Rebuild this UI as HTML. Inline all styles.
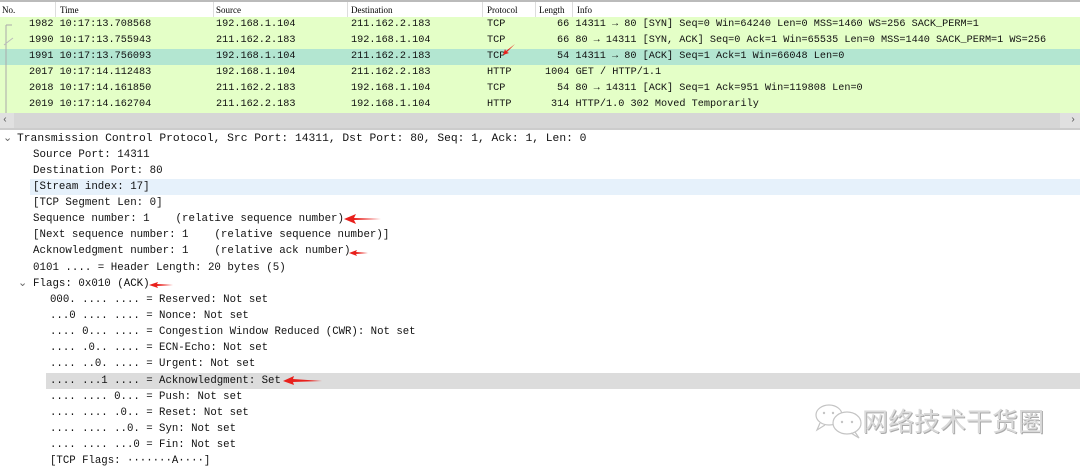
<!DOCTYPE html>
<html><head><meta charset="utf-8"><style>
body{margin:0;width:1080px;height:467px;background:#fff;overflow:hidden;position:relative;font-family:"Liberation Mono",monospace;}
.hdr{position:absolute;top:0;left:0;width:1080px;height:17px;background:#fff;border-top:2px solid #bbb;box-sizing:border-box;font-family:"Liberation Serif",serif;font-size:9px;color:#000;}
.hdr span{position:absolute;top:3px;}
.hdr i{position:absolute;top:0;height:17px;border-left:1px solid #ddd;}
.r{position:absolute;left:0;width:1080px;height:16px;background:#e4ffc7;font-size:10.2px;line-height:16px;color:#111;white-space:pre;}
.r span{position:absolute;top:0;}
.sel{background:#b3e6d1;}
.d{position:absolute;font-size:10.8px;line-height:16px;height:16px;white-space:pre;color:#111;}
</style></head><body>
<div class="hdr">
<span style="left:2px">No.</span><i style="left:55px"></i><span style="left:60px">Time</span><i style="left:213px"></i><span style="left:216px">Source</span><i style="left:347px"></i><span style="left:351px">Destination</span><i style="left:482px"></i><span style="left:487px">Protocol</span><i style="left:535px"></i><span style="left:539px">Length</span><i style="left:572px"></i><span style="left:577px">Info</span>
</div>
<div class="r" style="top:17px"><span style="left:29px">1982 10:17:13.708568</span><span style="left:216px">192.168.1.104</span><span style="left:351px">211.162.2.183</span><span style="left:487px">TCP</span><span style="left:557px">66 14311 → 80 [SYN] Seq=0 Win=64240 Len=0 MSS=1460 WS=256 SACK_PERM=1</span></div>
<div class="r" style="top:33px"><span style="left:29px">1990 10:17:13.755943</span><span style="left:216px">211.162.2.183</span><span style="left:351px">192.168.1.104</span><span style="left:487px">TCP</span><span style="left:557px">66 80 → 14311 [SYN, ACK] Seq=0 Ack=1 Win=65535 Len=0 MSS=1440 SACK_PERM=1 WS=256</span></div>
<div class="r sel" style="top:49px"><span style="left:29px">1991 10:17:13.756093</span><span style="left:216px">192.168.1.104</span><span style="left:351px">211.162.2.183</span><span style="left:487px">TCP</span><span style="left:557px">54 14311 → 80 [ACK] Seq=1 Ack=1 Win=66048 Len=0</span></div>
<div class="r" style="top:65px"><span style="left:29px">2017 10:17:14.112483</span><span style="left:216px">192.168.1.104</span><span style="left:351px">211.162.2.183</span><span style="left:487px">HTTP</span><span style="left:545px">1004 GET / HTTP/1.1</span></div>
<div class="r" style="top:81px"><span style="left:29px">2018 10:17:14.161850</span><span style="left:216px">211.162.2.183</span><span style="left:351px">192.168.1.104</span><span style="left:487px">TCP</span><span style="left:557px">54 80 → 14311 [ACK] Seq=1 Ack=951 Win=119808 Len=0</span></div>
<div class="r" style="top:97px"><span style="left:29px">2019 10:17:14.162704</span><span style="left:216px">211.162.2.183</span><span style="left:351px">192.168.1.104</span><span style="left:487px">HTTP</span><span style="left:551px">314 HTTP/1.0 302 Moved Temporarily</span></div>
<svg style="position:absolute;left:0;top:17px" width="30" height="96"><path d="M6 8 H12 M6 8 V96" stroke="#aaa" fill="none"/><path d="M4 28 L9 24 L13 21" stroke="#bbb" fill="none"/></svg>
<div style="position:absolute;top:113px;left:0;width:1080px;height:15px;background:#e0e0e0;"></div>
<div style="position:absolute;top:113px;left:14px;width:1046px;height:15px;background:#d6d6d6;"></div>
<div style="position:absolute;top:113px;left:2px;font-size:10px;line-height:15px;color:#555">‹</div>
<div style="position:absolute;top:113px;left:1070px;font-size:10px;line-height:15px;color:#555">›</div>
<div style="position:absolute;top:128px;left:0;width:1080px;height:2px;background:#ccc"></div>
<div style="position:absolute;top:179px;left:30px;width:1050px;height:16px;background:#e6f1fb"></div>
<div style="position:absolute;top:373px;left:46px;width:1034px;height:16px;background:#dcdcdc"></div>
<div class="d" style="top:131px;left:3px;color:#666">⌄</div>
<div class="d" style="top:131px;left:17px;font-size:11.3px">Transmission Control Protocol, Src Port: 14311, Dst Port: 80, Seq: 1, Ack: 1, Len: 0</div>
<div class="d" style="top:147px;left:33px">Source Port: 14311</div>
<div class="d" style="top:163px;left:33px">Destination Port: 80</div>
<div class="d" style="top:179px;left:33px">[Stream index: 17]</div>
<div class="d" style="top:195px;left:33px">[TCP Segment Len: 0]</div>
<div class="d" style="top:211px;left:33px">Sequence number: 1    (relative sequence number)</div>
<div class="d" style="top:227px;left:33px">[Next sequence number: 1    (relative sequence number)]</div>
<div class="d" style="top:243px;left:33px">Acknowledgment number: 1    (relative ack number)</div>
<div class="d" style="top:260px;left:33px">0101 .... = Header Length: 20 bytes (5)</div>
<div class="d" style="top:276px;left:18px;color:#666">⌄</div>
<div class="d" style="top:276px;left:33px">Flags: 0x010 (ACK)</div>
<div class="d" style="top:292px;left:50px;font-size:10.7px">000. .... .... = Reserved: Not set</div>
<div class="d" style="top:308px;left:50px;font-size:10.7px">...0 .... .... = Nonce: Not set</div>
<div class="d" style="top:324px;left:50px;font-size:10.7px">.... 0... .... = Congestion Window Reduced (CWR): Not set</div>
<div class="d" style="top:340px;left:50px;font-size:10.7px">.... .0.. .... = ECN-Echo: Not set</div>
<div class="d" style="top:356px;left:50px;font-size:10.7px">.... ..0. .... = Urgent: Not set</div>
<div class="d" style="top:373px;left:50px;font-size:10.7px">.... ...1 .... = Acknowledgment: Set</div>
<div class="d" style="top:389px;left:50px;font-size:10.7px">.... .... 0... = Push: Not set</div>
<div class="d" style="top:405px;left:50px;font-size:10.7px">.... .... .0.. = Reset: Not set</div>
<div class="d" style="top:421px;left:50px;font-size:10.7px">.... .... ..0. = Syn: Not set</div>
<div class="d" style="top:437px;left:50px;font-size:10.7px">.... .... ...0 = Fin: Not set</div>
<div class="d" style="top:453px;left:50px;font-size:10.7px">[TCP Flags: ·······A····]</div>
<svg style="position:absolute;left:0;top:0" width="1080" height="467">
<g fill="#e8201c">
<path d="M344 219 L356 214 L354 218 L381 219 L354 220 L356 224 Z"/>
<path d="M349 253 L357 250 L356 252 L368 253 L356 254 L357 256 Z"/>
<path d="M149 285 L158 282 L157 284 L173 285 L157 286 L158 288 Z"/>
<path d="M283 381 L294 376 L293 379 L322 381 L293 382 L294 385 Z"/>
<path d="M503 55 L505 49 L506 51 L515 44 L507 52 L509 53 Z"/>
</g>
</svg>
<svg style="position:absolute;left:810px;top:400px" width="60" height="40"><g fill="none" stroke="#c4c4c4" stroke-width="1.2"><ellipse cx="19" cy="15" rx="13" ry="10"/><path d="M10 23 L7 30 L15 25"/><ellipse cx="37" cy="23" rx="14" ry="11" fill="#fff"/><path d="M45 32 L49 38 L41 33"/></g><g fill="#c4c4c4"><circle cx="14" cy="13" r="1.2"/><circle cx="23" cy="13" r="1.2"/><circle cx="32" cy="22" r="1.2"/><circle cx="42" cy="22" r="1.2"/></g></svg>
<div style="position:absolute;left:862px;top:403px;font-family:'Noto Sans CJK SC',sans-serif;font-size:26px;line-height:36px;color:#dadada;text-shadow:1px 1px 0 #aaa;letter-spacing:0px">网络技术干货圈</div>
</body></html>
